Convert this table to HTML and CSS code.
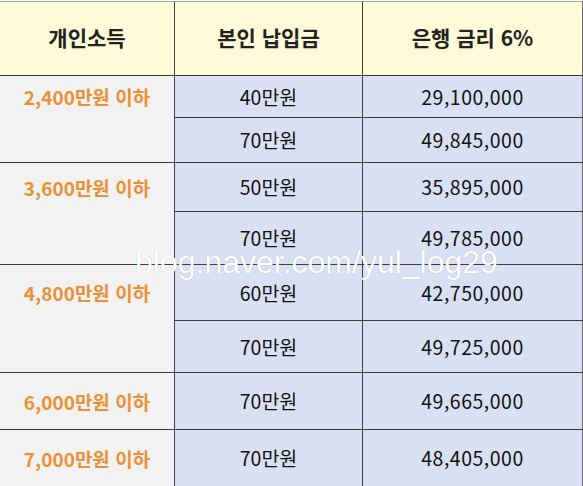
FILE: index.html
```html
<!DOCTYPE html>
<html lang="ko">
<head>
<meta charset="utf-8">
<link rel="stylesheet" href="styles.css">
</head>
<body>
<div class="wrap">
  <div class="table">
    <div class="cell head c1">개인소득</div>
    <div class="cell head c2">본인 납입금</div>
    <div class="cell head c3">은행 금리 6%</div>

    <div class="cell inc c1">2,400만원 이하</div>
    <div class="cell pay c2">40만원</div>
    <div class="cell amt c3">29,100,000</div>
    <div class="cell inc c1 cont"></div>
    <div class="cell pay c2">70만원</div>
    <div class="cell amt c3">49,845,000</div>

    <div class="cell inc c1">3,600만원 이하</div>
    <div class="cell pay c2">50만원</div>
    <div class="cell amt c3">35,895,000</div>
    <div class="cell inc c1 cont"></div>
    <div class="cell pay c2">70만원</div>
    <div class="cell amt c3">49,785,000</div>

    <div class="cell inc c1">4,800만원 이하</div>
    <div class="cell pay c2">60만원</div>
    <div class="cell amt c3">42,750,000</div>
    <div class="cell inc c1 cont"></div>
    <div class="cell pay c2">70만원</div>
    <div class="cell amt c3">49,725,000</div>

    <div class="cell inc c1">6,000만원 이하</div>
    <div class="cell pay c2">70만원</div>
    <div class="cell amt c3">49,665,000</div>

    <div class="cell inc c1">7,000만원 이하</div>
    <div class="cell pay c2">70만원</div>
    <div class="cell amt c3">48,405,000</div>
  </div>
  <div class="watermark">blog.naver.com/yul_log29</div>
</div>
</body>
</html>
```
FILE: styles.css
```css
html, body {
  margin: 0;
  padding: 0;
  background: #ffffff;
}
body {
  font-family: "Noto Sans CJK KR", "Noto Sans", sans-serif;
  color: #111;
}
.wrap {
  position: relative;
  width: 583px;
  height: 486px;
  overflow: hidden;
  padding-top: 1px;
  box-sizing: border-box;
}
.table {
  display: grid;
  grid-template-columns: 174px 188px 221px;
  grid-template-rows: 74px 42px 45px 49px 53px 56px 52px 57px 57px;
}
.cell {
  box-sizing: border-box;
  display: flex;
  align-items: center;
  justify-content: center;
  border-top: 1px solid #3a3a3a;
  line-height: 1;
}
.c2, .c3 {
  border-left: 1px solid #3f3f48;
}
.c3 {
  border-right: 1px solid #6a6a6a;
}
.head {
  background: #fffbd8;
  border-top-color: #a8a8a8;
  font-weight: 700;
  font-size: 21px;
  color: #222;
  padding-bottom: 2px;
}
.inc {
  background: #f2f2f2;
  color: #ea9035;
  font-weight: 700;
  font-size: 19px;
}
.cont {
  border-top: none;
}
.pay, .amt {
  background: #dae0f3;
}
.pay {
  font-size: 19.5px;
}
.amt {
  font-size: 19.5px;
  letter-spacing: 0.5px;
}
.watermark {
  position: absolute;
  left: 135px;
  top: 244px;
  font-family: "Liberation Sans", Arial, sans-serif;
  font-size: 32px;
  color: #ffffff;
  text-shadow: 0 0 1px rgba(0,0,0,0.25);
  white-space: nowrap;
}
```
